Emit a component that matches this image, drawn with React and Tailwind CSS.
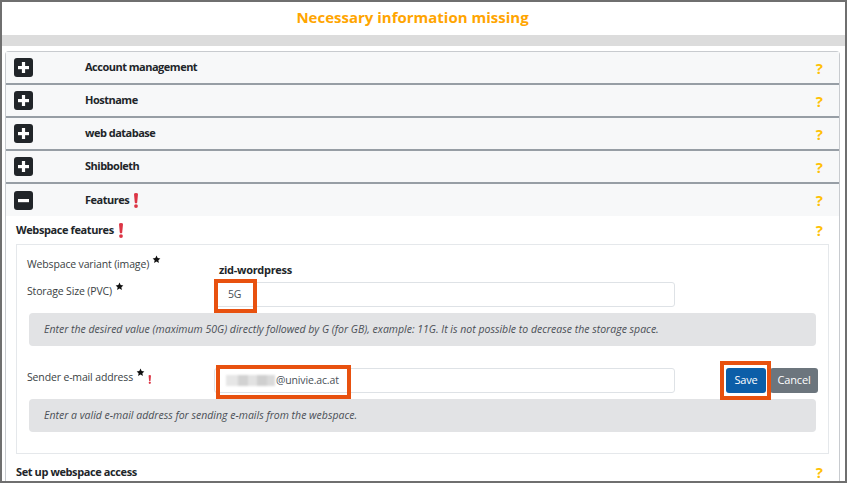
import React from "react";

const BoxIcon = ({ minus }) => (
    <svg width="19" height="19" viewBox="0 0 19 19" className="shrink-0">
        <rect width="19" height="19" rx="3" fill="#212529" />
        <rect x="4" y="8" width="11" height="3.2" fill="#fff" />
        {!minus && <rect x="7.9" y="4" width="3.2" height="11" fill="#fff" />}
    </svg>
);

const Bang = ({ h = 15 }) => (
    <svg width={h * 0.4} height={h} viewBox="0 0 6 15" className="block shrink-0">
        <path d="M1 1.3 Q1 0 3 0 Q5 0 5 1.3 L4.2 9.4 Q4.1 10.3 3 10.3 Q1.9 10.3 1.8 9.4 Z" fill="#dc3545" />
        <circle cx="3" cy="13.1" r="1.9" fill="#dc3545" />
    </svg>
);

const Star = () => (
    <svg width="9" height="9" viewBox="0 0 24 24" className="block shrink-0">
        <path d="M12 1.5l3.1 6.6 7.2.9-5.3 5 1.4 7.1L12 17.6l-6.4 3.5 1.4-7.1-5.3-5 7.2-.9z" fill="#111" />
    </svg>
);

const Help = () => (
    <span className="text-[#ffc107] font-bold text-[15px] leading-none">?</span>
);

const sections = ["Account management", "Hostname", "web database", "Shibboleth"];

const App = () => {
    return (
        <div className="w-[847px] h-[483px] border-2 border-[#6f6f6f] bg-white overflow-hidden font-['Open_Sans',sans-serif] text-[#212529]">
            <div className="h-[33px] flex items-center justify-center pr-[22px] pb-[3px] text-[#ffa500] font-bold text-[15px]">
                Necessary information missing
            </div>
            <div className="h-[11px] bg-[#dcdcdc]" />
            <div className="ml-[3px] mr-[5px] mt-[5px] h-[500px] border border-b-0 border-[#c8cbcf] rounded-t-[4px]">
                {sections.map((title) => (
                    <div key={title} className="h-[33px] flex items-center bg-[#f7f8f9] border-b-2 border-[#979ea5] pl-[8px] pr-[16px]">
                        <BoxIcon />
                        <span className="ml-[52px] font-bold text-[11px] tracking-[-0.5px]">{title}</span>
                        <span className="ml-auto"><Help /></span>
                    </div>
                ))}
                <div className="h-[32px] flex items-center bg-[#f7f8f9] pl-[8px] pr-[16px]">
                    <BoxIcon minus />
                    <span className="ml-[52px] font-bold text-[11px] tracking-[-0.5px]">Features</span>
                    <span className="ml-[4px] flex"><Bang /></span>
                    <span className="ml-auto"><Help /></span>
                </div>

                <div className="px-[10px] pt-[6px]">
                    <div className="flex items-center pr-[6px] h-[16px]">
                        <span className="font-bold text-[11px] tracking-[-0.4px]">Webspace features</span>
                        <span className="ml-[4px] flex"><Bang /></span>
                        <span className="ml-auto"><Help /></span>
                    </div>

                    <div className="mt-[6px] border border-[#e5e8eb] pt-[11px] px-[10px] pb-[21px] text-[10.5px] tracking-[-0.15px]">
                        <div className="flex">
                            <div className="w-[187px] leading-[16px] text-[#3a3f44] flex items-start">
                                <span>Webspace variant (image)</span>
                                <span className="ml-[3px] -mt-[1px] flex"><Star /></span>
                            </div>
                            <div className="pt-[6px] pl-[5px] leading-[16px] font-bold text-[11px] tracking-[-0.3px]">zid-wordpress</div>
                        </div>

                        <div className="flex mt-[4px]">
                            <div className="w-[187px] pt-[1px] leading-[16px] text-[#3a3f44] flex items-start">
                                <span>Storage Size (PVC)</span>
                                <span className="ml-[3px] -mt-[1px] flex"><Star /></span>
                            </div>
                            <div className="relative w-[461px] h-[25px] border border-[#dee2e6] rounded-[3px] flex items-center pl-[13px] text-[#495057]">
                                5G
                                <div className="absolute -left-[1px] -top-[4px] w-[43px] h-[34px] border-[4px] border-[#e8510f]" />
                            </div>
                        </div>

                        <div className="mt-[6px] mx-[2px] h-[33px] rounded-[4px] bg-[#e2e3e5] flex items-center pl-[15px] italic text-[10.5px] tracking-normal text-[#4a4f55]">
                            Enter the desired value (maximum 50G) directly followed by G (for GB), example: 11G. It is not possible to decrease the storage space.
                        </div>

                        <div className="flex mt-[22px] items-start">
                            <div className="w-[187px] pt-[1px] leading-[16px] text-[#3a3f44] flex items-start">
                                <span>Sender e-mail address</span>
                                <span className="ml-[3px] -mt-[1px] flex"><Star /></span>
                                <span className="ml-[3px] mt-[6px] flex"><Bang h={9} /></span>
                            </div>
                            <div className="relative w-[461px] h-[25px] border border-[#dee2e6] rounded-[3px] flex items-center pl-[11px] text-[#495057]">
                                <span className="flex h-[11px] mr-[1px] blur-[1px]">
                                    <span className="w-[12px] bg-[#e6e6e6]" />
                                    <span className="w-[10px] bg-[#d2d2d2]" />
                                    <span className="w-[9px] bg-[#e2e2e2]" />
                                    <span className="w-[10px] bg-[#cfcfcf]" />
                                    <span className="w-[8px] bg-[#dadada]" />
                                </span>
                                @univie.ac.at
                                <div className="absolute left-[1px] -top-[4px] w-[135px] h-[34px] border-[4px] border-[#e8510f]" />
                            </div>
                            <div className="ml-auto flex gap-[4px]">
                                <div className="relative">
                                    <button className="w-[40px] h-[25px] rounded-[3px] bg-[#0c5ea8] text-white text-[11px]">Save</button>
                                    <div className="absolute -left-[6px] -top-[7px] w-[51px] h-[39px] border-[4px] border-[#e8510f]" />
                                </div>
                                <button className="w-[48px] h-[25px] rounded-[3px] bg-[#6c757d] text-white text-[11px]">Cancel</button>
                            </div>
                        </div>

                        <div className="mt-[6px] mx-[2px] h-[33px] rounded-[4px] bg-[#e2e3e5] flex items-center pl-[15px] italic text-[10.5px] tracking-normal text-[#4a4f55]">
                            Enter a valid e-mail address for sending e-mails from the webspace.
                        </div>
                    </div>

                    <div className="flex items-center pr-[6px] h-[16px] mt-[10px]">
                        <span className="font-bold text-[11px] tracking-[-0.4px]">Set up webspace access</span>
                        <span className="ml-auto"><Help /></span>
                    </div>
                </div>
            </div>
        </div>
    );
};

export default App;
